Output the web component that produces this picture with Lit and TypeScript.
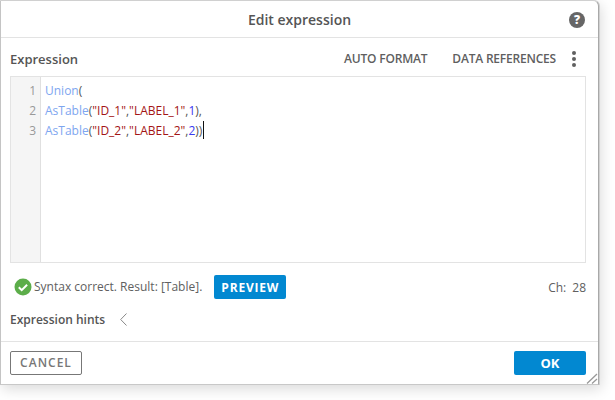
import { LitElement, html, css } from "lit";
import { customElement } from "lit/decorators.js";

@customElement("app-root")
export class AppRoot extends LitElement {
  static styles = css`
    :host { display: block; width: 615px; height: 400px; background: #fff; font-family: "Open Sans", sans-serif; color: #555; overflow: hidden; }
    .dialog { box-sizing: border-box; width: 599px; height: 385px; display: flex; flex-direction: column; background: #fff; border: 1px solid #a8a8a8; border-left-color: #c4c4c4; border-top-color: #d0d0d0; border-bottom-color: #c8c8c8; border-radius: 0 6px 0 0; box-shadow: 1px 0 0 #d0d0d0, 2px 4px 14px rgba(0,0,0,.15); position: relative; }
    .title { height: 36px; flex: none; display: flex; align-items: center; justify-content: center; border-bottom: 1px solid #e3e3e3; position: relative; font-size: 14px; font-weight: 600; color: #555; }
    .help { position: absolute; left: 568px; top: 11px; width: 16px; height: 16px; display: block; }
    .toolbar { box-sizing: border-box; height: 38px; flex: none; display: flex; align-items: center; padding: 3px 22px 0 9px; font-size: 13px; }
    .label { font-weight: 600; color: #555; }
    .spacer { flex: 1; }
    .action { font-size: 12px; font-weight: 600; color: #5f5f5f; letter-spacing: -.2px; }
    .action.first { margin-right: 25px; }
    .more { margin-left: 16px; width: 4px; display: flex; flex-direction: column; gap: 2px; }
    .more i { display: block; width: 4px; height: 4px; border-radius: 50%; background: #606060; }
    .editor { box-sizing: border-box; margin: 0 12px 0 9px; height: 187px; flex: none; border: 1px solid #e3e3e3; display: flex; font-size: 12px; line-height: 20px; }
    .gutter { box-sizing: border-box; width: 30px; flex: none; background: #f5f5f5; border-right: 1px solid #e0e0e0; padding: 4px 4px 0 0; text-align: right; color: #999; }
    .code { padding: 4px 0 0 4px; white-space: pre; color: #555; }
    .fn { color: #7ea6f0; }
    .str { color: #a31515; }
    .num { color: #3a3af0; }
    .caret { display: inline-block; width: 1px; height: 18px; margin-left: 1px; background: #111; vertical-align: -4px; }
    .status { height: 48px; flex: none; display: flex; align-items: center; padding: 0 12px 0 13px; font-size: 12px; color: #606060; }
    .check { width: 18px; height: 18px; flex: none; margin-right: 2px; display: block; }
    .result { padding-bottom: 2px; }
    .btn { box-sizing: border-box; display: flex; align-items: center; justify-content: center; background: #0288d1; color: #fff; border-radius: 2px; font-weight: 700; }
    .preview { width: 72px; height: 24px; margin-left: 12px; font-size: 12px; letter-spacing: .8px; }
    .ch { display: flex; gap: 6px; }
    .hints { box-sizing: content-box; height: 17px; flex: none; display: flex; align-items: center; padding: 0 0 13px 9px; font-size: 12px; font-weight: 600; color: #555; border-bottom: 1px solid #e3e3e3; }
    .chev { width: 7px; height: 13px; margin-left: 15px; display: block; }
    .footer { flex: 1; display: flex; align-items: center; justify-content: space-between; padding: 0 12px 0 9px; }
    .cancel { box-sizing: border-box; width: 72px; height: 24px; border: 1px solid #777; border-radius: 2px; display: flex; align-items: center; justify-content: center; padding-bottom: 2px; font-size: 12px; font-weight: 600; letter-spacing: 1px; color: #777; }
    .ok { width: 72px; height: 24px; font-size: 13px; }
    .grip { position: absolute; right: 0; bottom: 0; width: 12px; height: 12px; display: block; }
  `;

  render() {
    return html`
      <div class="dialog">
        <div class="title">
          Edit expression
          <svg class="help" viewBox="0 0 16 16"><circle cx="8" cy="8" r="8" fill="#666"></circle><text x="8" y="12" text-anchor="middle" font-family="Open Sans" font-size="12" font-weight="800" fill="#fff">?</text></svg>
        </div>
        <div class="toolbar">
          <span class="label">Expression</span>
          <span class="spacer"></span>
          <span class="action first">AUTO FORMAT</span>
          <span class="action">DATA REFERENCES</span>
          <span class="more"><i></i><i></i><i></i></span>
        </div>
        <div class="editor">
          <div class="gutter">1<br />2<br />3</div>
          <div class="code"><span class="fn">Union</span>(
<span class="fn">AsTable</span>(<span class="str">"ID_1"</span>,<span class="str">"LABEL_1"</span>,<span class="num">1</span>),
<span class="fn">AsTable</span>(<span class="str">"ID_2"</span>,<span class="str">"LABEL_2"</span>,<span class="num">2</span>))<span class="caret"></span></div>
        </div>
        <div class="status">
          <svg class="check" viewBox="0 0 18 18"><circle cx="9" cy="9" r="8.5" fill="#5cad4a"></circle><path d="M4.8 9.3l2.9 2.9 5.4-5.4" fill="none" stroke="#fff" stroke-width="2"></path></svg>
          <span class="result">Syntax correct. Result: [Table].</span>
          <span class="btn preview">PREVIEW</span>
          <span class="spacer"></span>
          <span class="ch"><span>Ch:</span><span>28</span></span>
        </div>
        <div class="hints">
          Expression hints
          <svg class="chev" viewBox="0 0 7 13"><path d="M6.5 .5L.7 6.5l5.8 6" fill="none" stroke="#888" stroke-width="1"></path></svg>
        </div>
        <div class="footer">
          <span class="cancel">CANCEL</span>
          <span class="btn ok">OK</span>
        </div>
        <svg class="grip" viewBox="0 0 12 12"><path d="M1 11.5L11 2M6 11.5l5-4.5" stroke="#999" stroke-width="1.3" fill="none"></path></svg>
      </div>
    `;
  }
}
